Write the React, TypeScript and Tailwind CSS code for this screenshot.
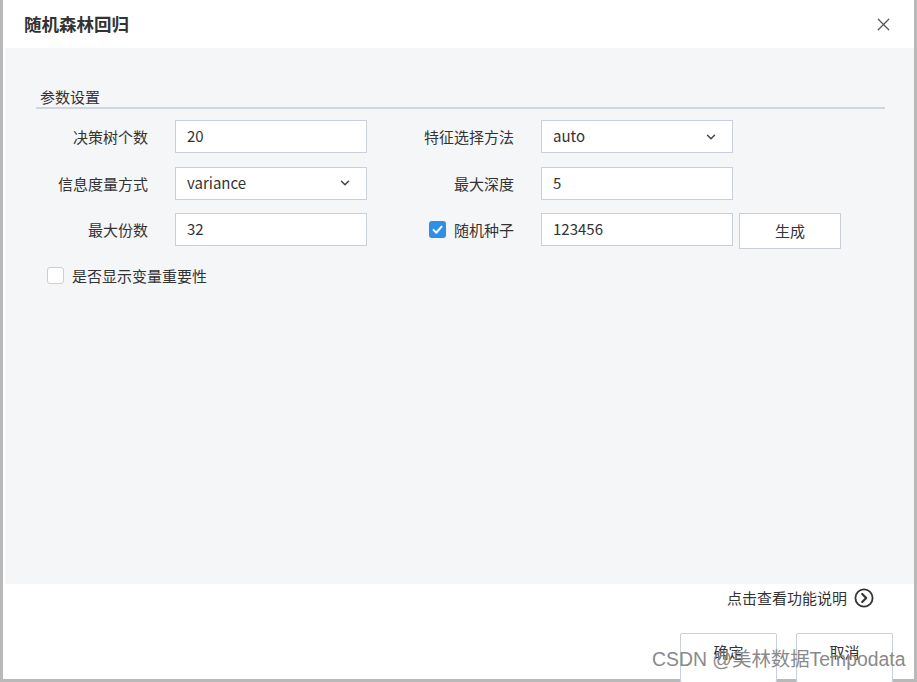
import { ChevronDown, X } from "lucide-react"

const font = { fontFamily: '"Noto Sans CJK SC", "Noto Sans", sans-serif' }

function Field({ value, select }: { value: string; select?: boolean }) {
  return (
    <div className="w-[192px] h-[33px] bg-white border border-[#c9d0da] flex items-center pl-[11px] pr-[14px] text-[15px] text-[#333]">
      <span className="flex-1">{value}</span>
      {select && <ChevronDown className="w-[14px] h-[14px] text-[#444]" strokeWidth={2.5} />}
    </div>
  )
}

function Label({ text, w }: { text: string; w: string }) {
  return <div className={`${w} text-right text-[15px] text-[#333] leading-none`}>{text}</div>
}

function Check({ checked }: { checked?: boolean }) {
  return checked ? (
    <div className="w-[17px] h-[17px] rounded-[3px] bg-[#2f8fe6] flex items-center justify-center">
      <svg viewBox="0 0 16 16" className="w-[13px] h-[13px]">
        <path d="M3 8.5 L6.5 12 L13 4.5" fill="none" stroke="white" strokeWidth="2.4" strokeLinecap="round" strokeLinejoin="round" />
      </svg>
    </div>
  ) : (
    <div className="w-[17px] h-[17px] rounded-[3px] bg-white border border-[#c9d0da]" />
  )
}

export default function App() {
  return (
    <div className="relative w-[917px] h-[682px] bg-white overflow-hidden" style={font}>
      <div className="w-full h-full flex flex-col border-l-[3px] border-r-[3px] border-b-[3px] border-[#b9b9b9]">
        {/* Header */}
        <div className="h-[48px] flex items-center justify-between pl-[21px] pr-[20px] shrink-0">
          <div className="text-[17.5px] font-bold text-[#333]">随机森林回归</div>
          <X className="w-[21px] h-[21px] text-[#555]" strokeWidth={1.4} />
        </div>

        {/* Panel */}
        <div className="h-[536px] ml-[2px] bg-[#f5f6f8] pl-[31px] pr-[29px] pt-[40px] shrink-0">
          <div className="border-b-2 border-[#cfd6e0] pl-[4px] pb-[1px] text-[15px] text-[#333] leading-[18px]">参数设置</div>

          <div className="mt-[11px] flex flex-col gap-[13.5px]">
            <div className="flex items-center h-[33px]">
              <Label text="决策树个数" w="w-[112px]" />
              <div className="ml-[27px]"><Field value="20" /></div>
              <Label text="特征选择方法" w="w-[147px]" />
              <div className="ml-[27px]"><Field value="auto" select /></div>
            </div>
            <div className="flex items-center h-[33px]">
              <Label text="信息度量方式" w="w-[112px]" />
              <div className="ml-[27px]"><Field value="variance" select /></div>
              <Label text="最大深度" w="w-[147px]" />
              <div className="ml-[27px]"><Field value="5" /></div>
            </div>
            <div className="flex items-start h-[33px]">
              <div className="h-[33px] flex items-center"><Label text="最大份数" w="w-[112px]" /></div>
              <div className="ml-[27px]"><Field value="32" /></div>
              <div className="w-[147px] h-[33px] flex items-center justify-end gap-[8px]">
                <Check checked />
                <span className="text-[15px] text-[#333] leading-none">随机种子</span>
              </div>
              <div className="ml-[27px]"><Field value="123456" /></div>
              <div className="ml-[6px] w-[102px] h-[36px] bg-white border border-[#c9d0da] flex items-center justify-center text-[15px] text-[#333]">生成</div>
            </div>
          </div>

          <div className="mt-[21px] ml-[11px] flex items-center gap-[8px]">
            <Check />
            <span className="text-[15px] text-[#333] leading-none">是否显示变量重要性</span>
          </div>
        </div>

        {/* Footer */}
        <div className="flex-1 flex flex-col">
          <div className="flex items-center justify-end pr-[40px] pt-[3px] h-[24px] gap-[7px]">
            <span className="text-[15px] text-[#333] leading-none">点击查看功能说明</span>
            <svg viewBox="0 0 20 20" className="w-[20px] h-[20px]">
              <circle cx="10" cy="10" r="8.6" fill="none" stroke="#333" strokeWidth="1.8" />
              <path d="M8.2 6 L12.2 10 L8.2 14" fill="none" stroke="#333" strokeWidth="2.2" strokeLinecap="round" strokeLinejoin="round" />
            </svg>
          </div>
          <div className="mt-[25px] flex justify-end gap-[19px] pr-[21px]">
            <div className="w-[97px] h-[50px] bg-white border border-[#c9d0da] rounded-[2px] flex justify-center pt-[7px] text-[15px] text-[#333]">确定</div>
            <div className="w-[97px] h-[50px] bg-white border border-[#c9d0da] rounded-[2px] flex justify-center pt-[7px] text-[15px] text-[#333]">取消</div>
          </div>
        </div>
      </div>

      {/* Watermark */}
      <div
        className="absolute left-[652px] top-[646px] text-[19.4px] leading-[26px] text-[#8a8a8a] whitespace-nowrap"
        style={{ fontFamily: '"Liberation Sans", "Noto Sans CJK SC", sans-serif' }}
      >
        CSDN @美林数据Tempodata
      </div>
    </div>
  )
}
